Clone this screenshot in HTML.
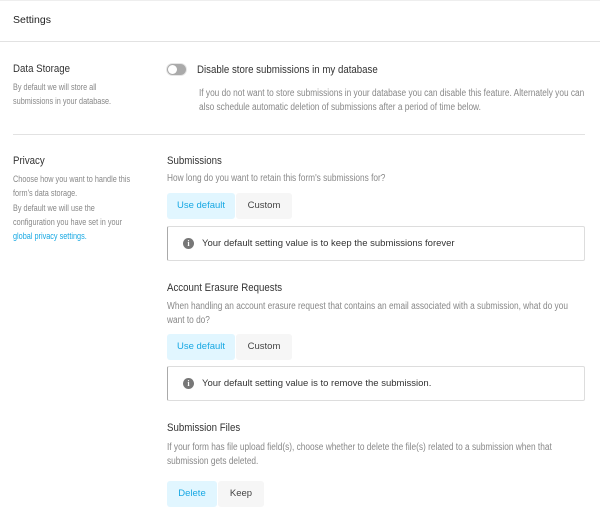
<!DOCTYPE html>
<html><head><style>
*{margin:0;padding:0;box-sizing:border-box}
body{width:600px;height:527px;background:#fff;font-family:"Liberation Sans",sans-serif;position:relative;overflow:hidden;color:#333}
.a{position:absolute;white-space:nowrap;transform-origin:0 0}
.t{font-size:11px;color:#333;transform:scaleX(0.88)}
.d{font-size:9px;color:#888;line-height:14.3px;transform:scaleX(0.81)}
.r{font-size:10px;transform:scaleX(0.83)}
.hr{position:absolute;height:1px;background:#e2e2e2}
.btn{position:absolute;height:26px;font-size:9.5px;line-height:26px;text-align:center;border-radius:3px}
.on{background:#e1f6ff;color:#17a8e3}
.off{background:#f6f6f6;color:#444}
.box{position:absolute;left:167px;width:418px;height:35px;border:1px solid #ddd;border-left-color:#aaa;border-radius:2px;font-size:9.5px;color:#333;line-height:33px;padding-left:34px}
.box i{position:absolute;left:15px;top:11px;width:11px;height:11px;border-radius:50%;background:#777;color:#fff;font-size:8px;font-style:normal;font-weight:bold;line-height:11px;text-align:center;font-family:"Liberation Serif",serif}
</style></head><body>
<div class="hr" style="top:0;left:0;width:600px;background:#eee"></div>
<div class="a" style="left:13px;top:14px;font-size:10.5px;color:#222">Settings</div>
<div class="hr" style="top:41px;left:0;width:600px"></div>

<div class="a t" style="left:13px;top:63px">Data Storage</div>
<div class="a d" style="left:13px;top:80px">By default we will store all<br>submissions in your database.</div>
<div class="a" style="left:166px;top:63px;width:21px;height:13px;border-radius:7px;background:#aaa;border:1px solid #e6e6e6"><div style="position:absolute;left:1px;top:1px;width:9px;height:9px;border-radius:50%;background:#fff"></div></div>
<div class="a t" style="left:197px;top:64px;font-size:11px">Disable store submissions in my database</div>
<div class="a d r" style="left:199px;top:87px">If you do not want to store submissions in your database you can disable this feature. Alternately you can<br>also schedule automatic deletion of submissions after a period of time below.</div>
<div class="hr" style="top:134px;left:13px;width:572px"></div>

<div class="a t" style="left:13px;top:155px">Privacy</div>
<div class="a d" style="left:13px;top:172px">Choose how you want to handle this<br>form's data storage.<br>By default we will use the<br>configuration you have set in your<br><span style="color:#17a8e3">global privacy settings.</span></div>

<div class="a t" style="left:167px;top:155px">Submissions</div>
<div class="a d r" style="left:167px;top:172px">How long do you want to retain this form's submissions for?</div>
<div class="btn on" style="left:167px;top:193px;width:68px">Use default</div>
<div class="btn off" style="left:236px;top:193px;width:56px">Custom</div>
<div class="box" style="top:226px"><i>i</i>Your default setting value is to keep the submissions forever</div>

<div class="a t" style="left:167px;top:282px">Account Erasure Requests</div>
<div class="a d r" style="left:167px;top:300px">When handling an account erasure request that contains an email associated with a submission, what do you<br>want to do?</div>
<div class="btn on" style="left:167px;top:334px;width:68px">Use default</div>
<div class="btn off" style="left:236px;top:334px;width:56px">Custom</div>
<div class="box" style="top:366px"><i>i</i>Your default setting value is to remove the submission.</div>

<div class="a t" style="left:167px;top:422px">Submission Files</div>
<div class="a d r" style="left:167px;top:441px">If your form has file upload field(s), choose whether to delete the file(s) related to a submission when that<br>submission gets deleted.</div>
<div class="btn on" style="left:167px;top:481px;width:50px">Delete</div>
<div class="btn off" style="left:218px;top:481px;width:46px">Keep</div>
</body></html>
